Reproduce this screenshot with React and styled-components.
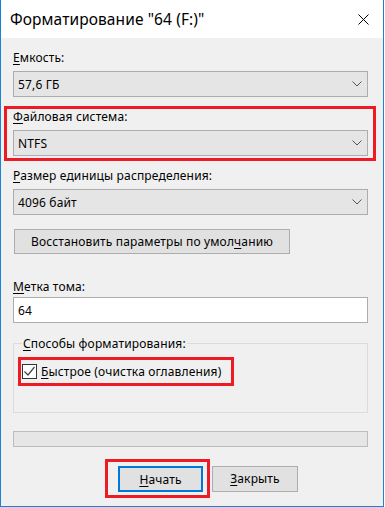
import React from 'react'
import styled, { createGlobalStyle } from 'styled-components'

const GlobalStyle = createGlobalStyle`
  html, body {
    margin: 0;
    padding: 0;
    background: #ffffff;
  }
  body {
    font-family: "Noto Sans", "Liberation Sans", sans-serif;
    font-size: 12px;
    letter-spacing: 0.15px;
    color: #000;
  }
`

const Window = styled.div`
  width: 384px;
  height: 507px;
  box-sizing: border-box;
  border: 1px solid #1883d7;
  border-top: none;
  background: #f0f0f0;
  display: flex;
  flex-direction: column;
`

const TitleBar = styled.div`
  height: 38px;
  background: #ffffff;
  display: flex;
  align-items: center;
  justify-content: space-between;
  padding: 0 14px 0 9px;
  font-size: 15.5px;
  letter-spacing: 0.1px;
`

const Body = styled.div`
  display: flex;
  flex-direction: column;
  padding: 12px 15px 0 12px;
`

const Label = styled.div`
  line-height: 15px;
  height: 15px;
  white-space: nowrap;
`

const Field = styled.div`
  display: flex;
  flex-direction: column;
  gap: ${p => p.$gap || 6}px;
  margin-bottom: ${p => p.$after || 0}px;
`

const Mark = styled.div`
  border: 3px solid #ed1c24;
  margin: ${p => p.$margin};
  padding: ${p => p.$padding};
  align-self: ${p => p.$self || 'stretch'};
`

const Combo = styled.div`
  height: 26px;
  box-sizing: border-box;
  border: 1px solid #adadad;
  background: #e5e5e5;
  display: flex;
  align-items: center;
  justify-content: space-between;
  padding: 0 5px 0 4px;
  line-height: 15px;
`

const TextBox = styled.div`
  height: 26px;
  box-sizing: border-box;
  border: 1px solid #adadad;
  background: #ffffff;
  display: flex;
  align-items: center;
  padding: 0 4px;
`

const Button = styled.div`
  height: ${p => p.$h || 26}px;
  width: ${p => p.$w}px;
  box-sizing: border-box;
  border: ${p => (p.$default ? '2px solid #0078d7' : '1px solid #adadad')};
  background: #e1e1e1;
  display: flex;
  align-items: center;
  justify-content: center;
  white-space: nowrap;
  margin-left: ${p => p.$ml || 0}px;
`

const Group = styled.fieldset`
  margin: 13px 0 0 0;
  padding: 0 0 26px 4px;
  border: 1px solid #dcdcdc;
  min-width: 0;
`

const Legend = styled.legend`
  margin-left: 4px;
  padding: 0 1px;
  line-height: 15px;
`

const CheckRow = styled.div`
  display: flex;
  align-items: center;
  gap: 4px;
  height: 23px;
`

const CheckBox = styled.div`
  width: 15px;
  height: 15px;
  box-sizing: border-box;
  border: 1px solid #333333;
  background: #ffffff;
  display: flex;
  align-items: center;
  justify-content: center;
`

const Progress = styled.div`
  height: 16px;
  box-sizing: border-box;
  border: 1px solid #bcbcbc;
  background: #e6e6e6;
  margin-top: 18px;
`

const Actions = styled.div`
  display: flex;
  align-items: center;
  margin-top: 12px;
  padding-left: 92px;
`

const U = styled.span`
  text-decoration: underline;
  text-underline-offset: 2px;
`

const Chevron = () => (
  <svg width="10" height="6" viewBox="0 0 10 6">
    <path d="M0.5 0.5 L5 5 L9.5 0.5" fill="none" stroke="#555" strokeWidth="1" />
  </svg>
)

const CloseIcon = () => (
  <svg width="11" height="11" viewBox="0 0 11 11">
    <path d="M0.5 0.5 L10.5 10.5 M10.5 0.5 L0.5 10.5" stroke="#000" strokeWidth="1" />
  </svg>
)

const Check = () => (
  <svg width="13" height="13" viewBox="0 0 13 13">
    <path d="M1.5 6.5 L5 10 L11.5 2" fill="none" stroke="#444" strokeWidth="1.2" />
  </svg>
)

const App = () => {
  return (
    <>
      <GlobalStyle />
      <Window>
        <TitleBar>
          <span>Форматирование "64 (F:)"</span>
          <CloseIcon />
        </TitleBar>
        <Body>
          <Field $after={9}>
            <Label><U>Е</U>мкость:</Label>
            <Combo>57,6 ГБ<Chevron /></Combo>
          </Field>

          <Mark $margin="0 -8px 7px -9px" $padding="0 5px 2px 6px">
            <Field>
              <Label><U>Ф</U>айловая система:</Label>
              <Combo>NTFS<Chevron /></Combo>
            </Field>
          </Mark>

          <Field $after={14}>
            <Label><U>Р</U>азмер единицы распределения:</Label>
            <Combo>4096 байт<Chevron /></Combo>
          </Field>

          <Button $w={276} $h={25} $ml={1}>Восстановить параметры по умол<U>ч</U>анию</Button>

          <Field $gap={3} style={{ marginTop: 25 }}>
            <Label><U>М</U>етка тома:</Label>
            <TextBox>64</TextBox>
          </Field>

          <Group>
            <Legend><U>С</U>пособы форматирования:</Legend>
            <Mark $margin="6px 0 0 0" $padding="0 10px 0 1px" $self="flex-start" style={{ display: 'inline-block' }}>
              <CheckRow>
                <CheckBox><Check /></CheckBox>
                <span><U>Б</U>ыстрое (очистка оглавления)</span>
              </CheckRow>
            </Mark>
          </Group>

          <Progress />

          <Actions>
            <Mark $padding="4px 4px 3px 10px">
              <Button $default $w={85}><U>Н</U>ачать</Button>
            </Mark>
            <Button $w={86} $ml={2}><U>З</U>акрыть</Button>
          </Actions>
        </Body>
      </Window>
    </>
  )
}

export default App
